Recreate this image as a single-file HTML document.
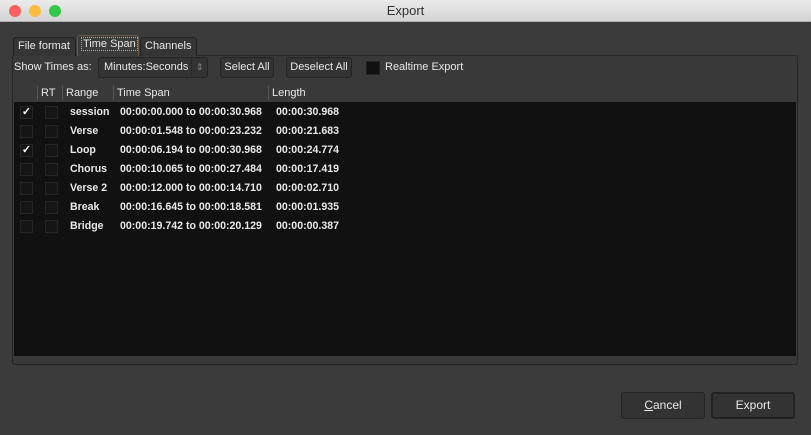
<!DOCTYPE html>
<html><head><style>
*{box-sizing:border-box;margin:0;padding:0}
body{width:811px;height:435px;background:#3b3b3b;font-family:"Liberation Sans",sans-serif;font-size:11px;color:#e8e8e8;position:relative;overflow:hidden;white-space:nowrap}
.tb{position:absolute;left:0;top:0;width:811px;height:22px;background:linear-gradient(#ebebeb,#d3d3d3);border-bottom:1px solid #b0b0b0;color:#333;font-size:13px;text-align:center;line-height:22px}
.dot{position:absolute;top:5px;width:12px;height:12px;border-radius:50%}
.a{position:absolute}
.tab{position:absolute;top:37px;height:19px;background:#353535;border:1px solid #222;border-bottom:none;line-height:17px;padding:0 4px;border-radius:3px 3px 0 0}
.btn{position:absolute;background:#333;border:1px solid #252525;border-radius:3px;text-align:center}
.row{position:absolute;left:14px;width:782px;height:19px;line-height:19px;font-weight:bold;font-size:10.6px}
.cb{position:absolute;top:3px;width:13px;height:13px;background:#151515;border:1px solid #262626}
</style></head><body>
<div class="tb">Export
<div class="dot" style="left:9px;background:#fc605c"></div>
<div class="dot" style="left:29px;background:#fdbc40"></div>
<div class="dot" style="left:49px;background:#34c84a"></div></div>
<div class="a" style="left:12px;top:55px;width:786px;height:310px;border:1px solid #262626;border-radius:3px;background:#393939"></div>
<div class="tab" style="left:13px;width:63px">File format</div>
<div class="tab" style="left:77px;top:35px;height:21px;background:#3b3b3b;width:62px;border-color:#6b5a45;padding:0 3px"><span style="border:1px dotted #aaa;padding:0 1px">Time Span</span></div>
<div class="tab" style="left:140px;width:57px">Channels</div>
<div class="a" style="left:14px;top:61px">Show Times as:</div>
<div class="btn" style="left:98px;top:57px;width:110px;height:21px;line-height:19px;text-align:left;padding-left:5px">Minutes:Seconds<span style="position:absolute;left:92px;top:0;color:#888;font-size:9px;border-left:1px solid #2a2a2a;padding-left:4px">⇕</span></div>
<div class="btn" style="left:220px;top:57px;width:54px;height:21px;line-height:19px">Select All</div>
<div class="btn" style="left:286px;top:57px;width:66px;height:21px;line-height:19px">Deselect All</div>
<div class="a" style="left:366px;top:61px;width:14px;height:14px;background:#111;border:1px solid #222"></div>
<div class="a" style="left:385px;top:61px">Realtime Export</div>
<div class="a" style="left:41px;top:87px">RT</div>
<div class="a" style="left:66px;top:87px">Range</div>
<div class="a" style="left:117px;top:87px">Time Span</div>
<div class="a" style="left:272px;top:87px">Length</div>
<div class="a" style="left:37px;top:86px;width:1px;height:14px;background:#555"></div>
<div class="a" style="left:62px;top:86px;width:1px;height:14px;background:#555"></div>
<div class="a" style="left:113px;top:86px;width:1px;height:14px;background:#555"></div>
<div class="a" style="left:268px;top:86px;width:1px;height:14px;background:#555"></div>
<div class="a" style="left:14px;top:102px;width:782px;height:254px;background:#111"></div>
<div class="row" style="top:103px"><div class="cb" style="left:6px;color:#fff;font-size:11px;line-height:11px;text-align:center">✓</div><div class="cb" style="left:31px"></div><span class="a" style="left:56px">session</span><span class="a" style="left:106px">00:00:00.000 to 00:00:30.968</span><span class="a" style="left:262px">00:00:30.968</span></div>
<div class="row" style="top:122px"><div class="cb" style="left:6px"></div><div class="cb" style="left:31px"></div><span class="a" style="left:56px">Verse</span><span class="a" style="left:106px">00:00:01.548 to 00:00:23.232</span><span class="a" style="left:262px">00:00:21.683</span></div>
<div class="row" style="top:141px"><div class="cb" style="left:6px;color:#fff;font-size:11px;line-height:11px;text-align:center">✓</div><div class="cb" style="left:31px"></div><span class="a" style="left:56px">Loop</span><span class="a" style="left:106px">00:00:06.194 to 00:00:30.968</span><span class="a" style="left:262px">00:00:24.774</span></div>
<div class="row" style="top:160px"><div class="cb" style="left:6px"></div><div class="cb" style="left:31px"></div><span class="a" style="left:56px">Chorus</span><span class="a" style="left:106px">00:00:10.065 to 00:00:27.484</span><span class="a" style="left:262px">00:00:17.419</span></div>
<div class="row" style="top:179px"><div class="cb" style="left:6px"></div><div class="cb" style="left:31px"></div><span class="a" style="left:56px">Verse 2</span><span class="a" style="left:106px">00:00:12.000 to 00:00:14.710</span><span class="a" style="left:262px">00:00:02.710</span></div>
<div class="row" style="top:198px"><div class="cb" style="left:6px"></div><div class="cb" style="left:31px"></div><span class="a" style="left:56px">Break</span><span class="a" style="left:106px">00:00:16.645 to 00:00:18.581</span><span class="a" style="left:262px">00:00:01.935</span></div>
<div class="row" style="top:217px"><div class="cb" style="left:6px"></div><div class="cb" style="left:31px"></div><span class="a" style="left:56px">Bridge</span><span class="a" style="left:106px">00:00:19.742 to 00:00:20.129</span><span class="a" style="left:262px">00:00:00.387</span></div>
<div class="btn" style="left:621px;top:392px;width:84px;height:27px;line-height:25px;font-size:12px"><u>C</u>ancel</div>
<div class="btn" style="left:711px;top:392px;width:84px;height:27px;line-height:23px;font-size:12px;border:2px solid #222">Export</div>
</body></html>
